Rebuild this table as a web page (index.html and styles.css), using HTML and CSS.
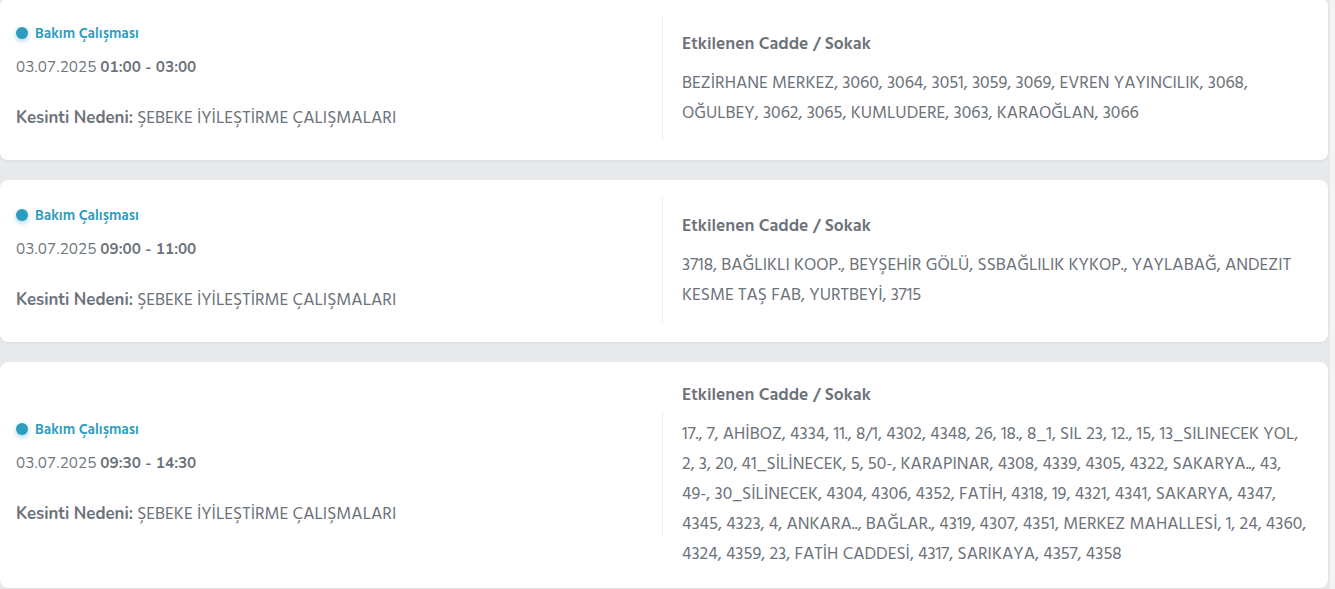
FILE: index.html
```html
<!DOCTYPE html>
<html lang="tr">
<head>
<meta charset="utf-8">
<title>Kesintiler</title>
<link rel="stylesheet" href="styles.css">
</head>
<body>
<div class="list">
  <div class="card first">
    <div class="info">
      <div class="badge"><span class="dot"></span>Bakım Çalışması</div>
      <div class="date">03.07.2025 <b>01:00 - 03:00</b></div>
      <div class="reason"><b>Kesinti Nedeni:</b> ŞEBEKE İYİLEŞTİRME ÇALIŞMALARI</div>
    </div>
    <div class="streets">
      <div class="streets-title">Etkilenen Cadde / Sokak</div>
      <div class="streets-list">BEZİRHANE MERKEZ, 3060, 3064, 3051, 3059, 3069, EVREN YAYINCILIK, 3068, OĞULBEY, 3062, 3065, KUMLUDERE, 3063, KARAOĞLAN, 3066</div>
    </div>
  </div>
  <div class="card">
    <div class="info">
      <div class="badge"><span class="dot"></span>Bakım Çalışması</div>
      <div class="date">03.07.2025 <b>09:00 - 11:00</b></div>
      <div class="reason"><b>Kesinti Nedeni:</b> ŞEBEKE İYİLEŞTİRME ÇALIŞMALARI</div>
    </div>
    <div class="streets">
      <div class="streets-title">Etkilenen Cadde / Sokak</div>
      <div class="streets-list">3718, BAĞLIKLI KOOP., BEYŞEHİR GÖLÜ, SSBAĞLILIK KYKOP., YAYLABAĞ, ANDEZIT KESME TAŞ FAB, YURTBEYİ, 3715</div>
    </div>
  </div>
  <div class="card">
    <div class="info">
      <div class="badge"><span class="dot"></span>Bakım Çalışması</div>
      <div class="date">03.07.2025 <b>09:30 - 14:30</b></div>
      <div class="reason"><b>Kesinti Nedeni:</b> ŞEBEKE İYİLEŞTİRME ÇALIŞMALARI</div>
    </div>
    <div class="streets">
      <div class="streets-title">Etkilenen Cadde / Sokak</div>
      <div class="streets-list">17., 7, AHİBOZ, 4334, 11., 8/1, 4302, 4348, 26, 18., 8_1, SIL 23, 12., 15, 13_SILINECEK YOL, 2, 3, 20, 41_SİLİNECEK, 5, 50-, KARAPINAR, 4308, 4339, 4305, 4322, SAKARYA.., 43, 49-, 30_SİLİNECEK, 4304, 4306, 4352, FATİH, 4318, 19, 4321, 4341, SAKARYA, 4347, 4345, 4323, 4, ANKARA.., BAĞLAR., 4319, 4307, 4351, MERKEZ MAHALLESİ, 1, 24, 4360, 4324, 4359, 23, FATİH CADDESİ, 4317, SARIKAYA, 4357, 4358</div>
    </div>
  </div>
</div>
</body>
</html>
```

FILE: styles.css
```css
html, body {
  margin: 0;
  padding: 0;
}
body {
  background: #f3f3f4;
  font-family: Hind, Lato, "Noto Sans", sans-serif;
  color: #6c727a;
}
.list {
  width: 1330px;
  background: #e8e9eb;
  display: flex;
  flex-direction: column;
  gap: 20px;
  padding-bottom: 2px;
}
.card {
  position: relative;
  display: flex;
  align-items: center;
  width: 1328px;
  min-height: 162px;
  background: #fff;
  border-radius: 8px;
  box-shadow: 0 1px 3px rgba(0,0,0,0.06);
}
.card.first {
  margin-top: -2px;
}
.card::after {
  content: "";
  position: absolute;
  left: 662px;
  top: 50%;
  height: 125px;
  margin-top: -63px;
  border-left: 1px solid #eceef0;
}
.info {
  flex: 0 0 auto;
  width: 630px;
  padding: 26px 16px 30px;
}
.badge {
  display: flex;
  align-items: center;
  height: 20px;
  font-size: 14.7px;
  font-weight: 600;
  color: #2d9dbf;
}
.dot {
  width: 12px;
  height: 12px;
  border-radius: 50%;
  background: #2d9dbf;
  box-shadow: 0 2px 5px rgba(45,157,191,0.45);
  margin-right: 7px;
  margin-top: -3px;
}
.date {
  margin-top: 11px;
  height: 24px;
  line-height: 24px;
  font-family: Nunito, Lato, sans-serif;
  font-size: 15.3px;
  font-weight: 400;
  color: #71777e;
}
.date b {
  font-weight: 700;
  color: #6c727a;
}
.reason {
  margin-top: 27px;
  height: 24px;
  line-height: 24px;
  font-size: 17.5px;
  font-weight: 400;
  white-space: nowrap;
}
.reason b {
  font-family: Nunito, Lato, sans-serif;
  font-size: 16.8px;
  font-weight: 700;
}
.streets {
  flex: 1 1 auto;
  min-width: 0;
  padding: 22px 18px 18px 20px;
}
.streets-title {
  line-height: 24px;
  font-size: 17.5px;
  font-weight: 600;
  margin-bottom: 12px;
}
.streets-list {
  font-size: 17.5px;
  line-height: 30px;
}
```
